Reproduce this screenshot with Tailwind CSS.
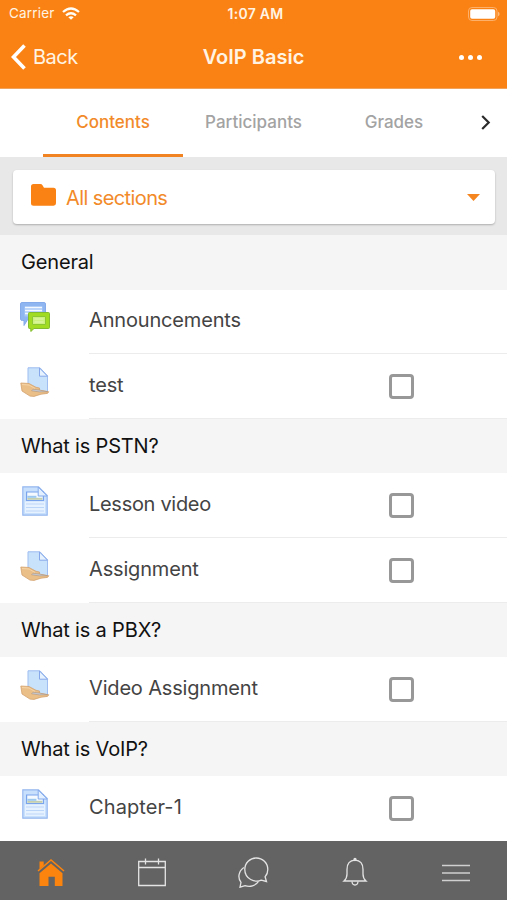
<!DOCTYPE html>
<html lang="en">
  <head>
    <meta charset="UTF-8" />
    <meta name="viewport" content="width=device-width, initial-scale=1.0" />
    <title>VoIP Basic</title>
    <script src="https://cdn.jsdelivr.net/npm/@tailwindcss/browser@4"></script>
  </head>
  <body class="bg-white font-['Inter','Liberation_Sans',sans-serif] h-[900px] w-[507px] overflow-hidden flex flex-col">
    <!-- Shared activity icons -->
    <svg class="hidden">
      <symbol id="icon-forum" viewBox="0 0 30 30">
        <path d="M2 .5h22q1.500 0 1.500 1.500V17H8l-4 6.500V18.500H2.500Q.5 18.500.5 17V2Q.5.500 2 .5z" fill="#8fb6f0" stroke="#86abea" />
        <path d="M4.500 4.500h18v10h-18z" fill="#a9c9f8" />
        <path d="M5 5.500h17M5 8.500h17M5 11.500h5" stroke="#f4f9ff" stroke-width="1.400" />
        <path d="M9.500 10.500h19q1 0 1 1v14q0 1-1 1H14l-3.200 3v-3H9.500q-1 0-1-1v-14q0-1 1-1z" fill="#a2dc22" stroke="#82bb30" />
        <path d="M12.500 14.500h13v8h-13z" fill="#cdf07f" stroke="#8cc832" />
        <path d="M14.500 17h9M14.500 20h9" stroke="#e2f8b4" stroke-width="1.200" />
      </symbol>
      <symbol id="icon-assign" viewBox="0 0 30 30">
        <path d="M8 .8h12l7.500 8V25H8z" fill="#c8e2fb" stroke="#9fbdf0" />
        <path d="M19.500 1v8.200h8z" fill="#e6f3ff" stroke="#86a8ea" />
        <path d="M.8 16l8.200.5 7 3.800 3.500.7-.2 2.200 9.500 1.600-1.300 1.600-6.500.8-7 2.200-4-.3L2 24z" fill="#ebbf88" stroke="#d3a26e" stroke-width=".8" />
        <path d="M2 17.500l7 .5 6 3.500" fill="none" stroke="#f6d4a6" />
        <path d="M11.500 23.800l1.500-1.600 6 .7 8.500 1.900-8 .1z" fill="#c4c9d4" stroke="#b3977c" stroke-width=".6" />
      </symbol>
      <symbol id="icon-page" viewBox="0 0 26 30">
        <path d="M.8.800h15.700l8.700 8.700v19.700H.8z" fill="#c9e0fc" stroke="#96b8f0" stroke-width="1.200" />
        <path d="M3 15.500h20v11.500H3z" fill="#e6f2ff" />
        <path d="M4 18h18M4 21.500h18M4 25h18" stroke="#bcd6f9" />
        <path d="M4.600 6h16.800v8.500H4.600z" fill="#f4faff" stroke="#7aa4ec" stroke-width="1.200" />
        <path d="M5.400 11.800h15v2h-15z" fill="#c3cfae" />
        <path d="M5.400 9.800h9v2h-9z" fill="#9cc8f0" />
        <path d="M16.200 1v9h9z" fill="#e2f0ff" stroke="#86abec" />
      </symbol>
    </svg>

    <!-- Header -->
    <header class="h-[89px] shrink-0 bg-[#fa8214] text-[#fff4e4] border-b border-[#f0a35c]">
      <div class="h-[27px] grid grid-cols-3 items-center pl-[9px] pr-[7px] text-[13px]">
        <div class="flex items-center gap-[7px]">
          <span class="text-[13.5px] tracking-[0.2px]">Carrier</span>
          <svg class="w-[18px] h-[13px]" viewBox="0 0 18 13" fill="none" stroke="#fffdf5" stroke-width="2.300">
            <path d="M1 5q8-7 16 0M4 8.300q5-4.200 10 0" />
            <path d="M6.300 10.200q2.700-2 5.400 0L9 12.800z" fill="#fffdf5" stroke="none" />
          </svg>
        </div>
        <span class="text-center text-[14px] font-semibold tracking-[0.3px] pl-[2px]">1:07 AM</span>
        <svg class="justify-self-end w-[32px] h-[14px]" viewBox="0 0 32 14">
          <rect x=".5" y=".5" width="28.500" height="13" rx="3.500" fill="none" stroke="#fcb06a" />
          <rect x="2.200" y="2.200" width="25" height="9.600" rx="1.800" fill="#fff" />
          <path d="M30 4.800q1.600.5 1.600 2.200T30 9.200z" fill="#fcb979" />
        </svg>
      </div>
      <div class="h-[60px] grid grid-cols-3 items-center pl-[11px] pr-[25px]">
        <div class="flex items-center gap-[7px]">
          <svg class="w-[15px] h-[26px]" viewBox="0 0 15 26" fill="none" stroke="#fff" stroke-width="3.600"><path d="M13.500 1.500L2.500 13l11 11.500" /></svg>
          <span class="text-[20px] tracking-[-0.5px]">Back</span>
        </div>
        <h1 class="text-center text-[20px] font-semibold tracking-[0px] whitespace-nowrap pl-[14px]">VoIP Basic</h1>
        <div class="flex justify-end gap-[4px]">
          <i class="size-[5px] rounded-full bg-white"></i>
          <i class="size-[5px] rounded-full bg-white"></i>
          <i class="size-[5px] rounded-full bg-white"></i>
        </div>
      </div>
    </header>

    <!-- Tabs -->
    <nav class="h-[68px] shrink-0 flex pl-[43px] text-[17px] font-medium text-[#a3a3a3]">
      <div class="w-[140px] text-center leading-[66px] text-[#f28a2a] border-b-3 border-[#f28322]">Contents</div>
      <div class="w-[141px] text-center leading-[66px]">Participants</div>
      <div class="w-[140px] text-center leading-[66px]">Grades</div>
      <svg class="w-[10px] h-[15px] mt-[26px] ml-[17px]" viewBox="0 0 10 15" fill="none" stroke="#2b2b2b" stroke-width="2.200"><path d="M1.200 1l6.500 6.500L1.200 14" /></svg>
    </nav>

    <!-- Section selector -->
    <div class="h-[78px] shrink-0 bg-[#e8e8e8] pt-[13px] px-[13px]">
      <div class="h-[54px] w-[482px] bg-white rounded-[4px] shadow-[0_1px_2px_rgba(0,0,0,0.25)] flex items-center pl-[18px] pr-[15px]">
        <svg class="w-[25px] h-[22px] mb-[4px]" viewBox="0 0 25 22"><path d="M2.500 0h6.800q1.500 0 2.200 1.200L13 3.800h9.500Q25 3.800 25 6.300v13Q25 21.700 22.500 21.700h-20Q0 21.700 0 19.200V2.500Q0 0 2.500 0z" fill="#fa8214" /></svg>
        <span class="ml-[10px] text-[20px] tracking-[-0.6px] text-[#f28a2a] pt-[1px]">All sections</span>
        <svg class="ml-auto w-[13px] h-[7px]" viewBox="0 0 13 7"><path d="M0 0h13L6.500 7z" fill="#f5851f" /></svg>
      </div>
    </div>

    <!-- Course contents -->
    <main class="h-[606px] shrink-0 text-[20px] tracking-[-0.17px] text-[#444]">
      <h2 class="h-[55px] leading-[54px] pl-[21px] bg-[#f5f5f5] text-[#111]">General</h2>
      <div class="h-[64px] flex pl-[20px]">
        <svg class="w-[30px] h-[30px] mt-[12px]"><use href="#icon-forum" /></svg>
        <div class="ml-[39px] flex-1 flex items-center border-b border-[#ececec]">
          <span class="pb-[3px]">Announcements</span>
        </div>
      </div>
      <div class="h-[65px] flex pl-[20px]">
        <svg class="w-[30px] h-[30px] mt-[13px]"><use href="#icon-assign" /></svg>
        <div class="ml-[39px] flex-1 flex items-center justify-between pr-[93px] border-b border-[#ececec]">
          <span class="pb-[3px]">test</span>
          <i class="size-[25px] border-3 border-[#989898] rounded-[4px]"></i>
        </div>
      </div>

      <h2 class="h-[54px] leading-[54px] pl-[21px] bg-[#f5f5f5] text-[#111]">What is PSTN?</h2>
      <div class="h-[65px] flex pl-[22px]">
        <svg class="w-[26px] h-[30px] mt-[13px]"><use href="#icon-page" /></svg>
        <div class="ml-[41px] flex-1 flex items-center justify-between pr-[93px] border-b border-[#ececec]">
          <span class="pb-[3px] tracking-[-0.3px]">Lesson video</span>
          <i class="size-[25px] border-3 border-[#989898] rounded-[4px]"></i>
        </div>
      </div>
      <div class="h-[65px] flex pl-[20px]">
        <svg class="w-[30px] h-[30px] mt-[13px]"><use href="#icon-assign" /></svg>
        <div class="ml-[39px] flex-1 flex items-center justify-between pr-[93px] border-b border-[#ececec]">
          <span class="pb-[3px]">Assignment</span>
          <i class="size-[25px] border-3 border-[#989898] rounded-[4px]"></i>
        </div>
      </div>

      <h2 class="h-[54px] leading-[54px] pl-[21px] bg-[#f5f5f5] text-[#111]">What is a PBX?</h2>
      <div class="h-[65px] flex pl-[20px]">
        <svg class="w-[30px] h-[30px] mt-[13px]"><use href="#icon-assign" /></svg>
        <div class="ml-[39px] flex-1 flex items-center justify-between pr-[93px] border-b border-[#ececec]">
          <span class="pb-[3px]">Video Assignment</span>
          <i class="size-[25px] border-3 border-[#989898] rounded-[4px]"></i>
        </div>
      </div>

      <h2 class="h-[54px] leading-[54px] pl-[21px] bg-[#f5f5f5] text-[#111]">What is VoIP?</h2>
      <div class="h-[65px] flex pl-[22px]">
        <svg class="w-[26px] h-[30px] mt-[13px]"><use href="#icon-page" /></svg>
        <div class="ml-[41px] flex-1 flex items-center justify-between pr-[93px]">
          <span class="pb-[3px] tracking-[0.1px]">Chapter-1</span>
          <i class="size-[25px] border-3 border-[#989898] rounded-[4px]"></i>
        </div>
      </div>
    </main>

    <!-- Bottom bar -->
    <footer class="h-[59px] shrink-0 bg-[#636363] grid grid-cols-5 justify-items-center pt-[16px]">
      <svg class="w-[28px] h-[30px]" viewBox="0 0 28 30" fill="#fb840f">
        <path d="M2.500 4.500h4.200v4L2.500 12zM14 6.500l11.500 9.800V29H17.800V19.800h-6.300V29H2.500V16.300z" />
        <path d="M1 14L14 3l13 11" fill="none" stroke="#fb840f" stroke-width="1.600" />
      </svg>
      <svg class="w-[28px] h-[30px]" viewBox="0 0 28 30" fill="none" stroke="#e4e4e4" stroke-width="1.300">
        <path d="M.7 4.500h26.600v24H.7zM.7 10.500h26.600M7.500 1.500v6M20.500 1.500v6" />
      </svg>
      <svg class="w-[32px] h-[31px]" viewBox="0 0 32 31" fill="none" stroke="#e4e4e4" stroke-width="1.300">
        <path d="M29.500 24.500l-5.200-1.300C18 26 7.800 22 7.800 12.500 7.800 6 13 1 19.300 1s11.500 5 11.500 11.500c0 3-1 5.400-2.700 7.300z" />
        <path d="M6.800 10.500C1.200 14.500.6 21 4 25.300L3 30.200l5-1.600c5 1.800 10.500.3 13.500-4.300" />
      </svg>
      <svg class="w-[26px] h-[30px]" viewBox="0 0 26 30" fill="none" stroke="#e4e4e4" stroke-width="1.300">
        <path d="M2 24q3-2.500 3-7v-4.500Q5 3.500 13 3.200q8 .3 8 9.300V17q0 4.500 3 7z" />
        <path d="M10 24.500q.2 3.500 3 3.500t3-3.500" />
        <circle cx="13" cy="2.500" r="1" fill="#e4e4e4" />
      </svg>
      <svg class="w-[28px] h-[30px]" viewBox="0 0 28 30" fill="none" stroke="#d0d0d0" stroke-width="1.500">
        <path d="M0 8.500h28M0 16h28M0 23.500h28" />
      </svg>
    </footer>
  </body>
</html>
